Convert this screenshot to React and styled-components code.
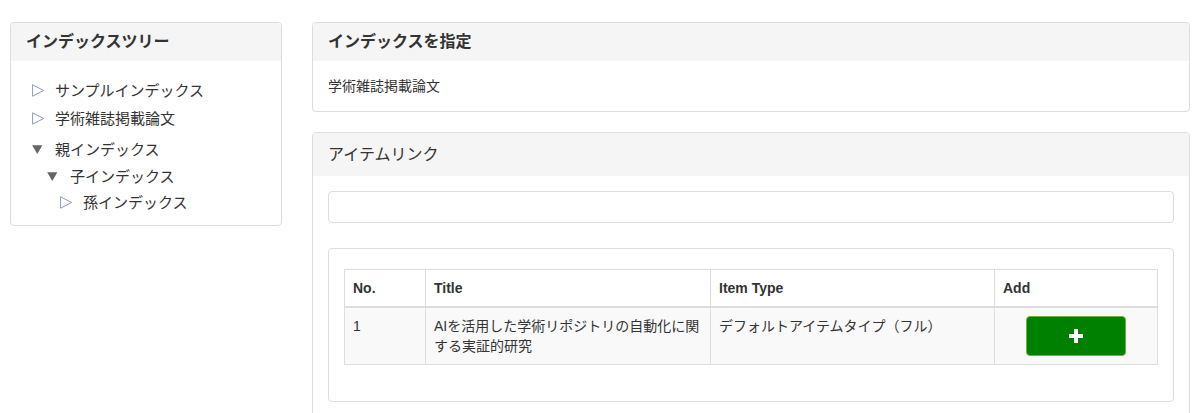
import React from "react";
import styled, { createGlobalStyle } from "styled-components";

const Global = createGlobalStyle`
  html, body { margin: 0; padding: 0; background: #fff; }
  body {
    font-family: "Liberation Sans", "Noto Sans CJK JP", sans-serif;
    font-size: 14px;
    line-height: 20px;
    color: #333;
  }
  * { box-sizing: border-box; }
`;

const Page = styled.div`
  display: flex;
  align-items: flex-start;
  gap: 30px;
  padding: 22px 6px 0 10px;
`;

const LeftCol = styled.div`
  width: 272px;
  flex: none;
`;

const RightCol = styled.div`
  flex: 1;
  display: flex;
  flex-direction: column;
  gap: 20px;
`;

const Panel = styled.section`
  border: 1px solid #ddd;
  border-radius: 4px;
  background: #fff;
  overflow: hidden;
`;

const PanelHeading = styled.div`
  background: #f5f5f5;
  height: ${(p) => p.$h || 38}px;
  padding: 0 15px;
  display: flex;
  align-items: center;
  font-size: 16px;
  font-weight: ${(p) => (p.$bold ? 700 : 400)};
  color: #333;
`;

const PanelBody = styled.div`
  padding: ${(p) => p.$pad || "15px"};
`;

const TreeList = styled.ul`
  list-style: none;
  margin: 0;
  padding: 0 0 0 ${(p) => p.$indent || 0}px;
`;

const TreeRow = styled.div`
  display: flex;
  align-items: center;
  height: ${(p) => p.$h}px;
  margin-top: ${(p) => p.$mt || 0}px;
  font-size: 15px;
  color: #333;
  white-space: nowrap;
  padding-top: 1px;
`;

const Arrow = styled.svg`
  flex: none;
  width: 13px;
  height: 13px;
  margin-right: 10px;
`;

const OpenArrow = () => (
  <Arrow viewBox="0 0 13 13">
    <path d="M0.6 0.8 L11.6 6.5 L0.6 12.2 Z" fill="none" stroke="#8d9ac0" strokeWidth="1" />
  </Arrow>
);

const ClosedArrow = () => (
  <Arrow viewBox="0 0 13 13">
    <path d="M0.2 2.2 L10.4 2.2 L5.3 11 Z" fill="#666" />
  </Arrow>
);

const SearchInput = styled.input`
  display: block;
  width: 100%;
  height: 32px;
  border: 1px solid #ddd;
  border-radius: 4px;
  padding: 6px 12px;
  font: inherit;
`;

const Well = styled.div`
  margin-top: 25px;
  border: 1px solid #ddd;
  border-radius: 4px;
  padding: 20px 15px 36px;
`;

const Table = styled.table`
  width: 100%;
  border-collapse: collapse;
  table-layout: fixed;
  border: 1px solid #ddd;
`;

const Th = styled.th`
  text-align: left;
  font-weight: 700;
  padding: 8px;
  line-height: 20px;
  border: 1px solid #ddd;
  border-bottom: 2px solid #ddd;
`;

const Tr = styled.tr`
  background: ${(p) => (p.$striped ? "#f9f9f9" : "#fff")};
`;

const Td = styled.td`
  padding: 8px;
  vertical-align: top;
  line-height: 20px;
  border: 1px solid #ddd;
  text-align: ${(p) => p.$align || "left"};
`;

const AddButton = styled.button`
  width: 100px;
  height: 40px;
  background: #008000;
  border: 1px solid #6fb23a;
  border-radius: 4px;
  display: inline-flex;
  align-items: center;
  justify-content: center;
  cursor: pointer;
  padding: 0;
  vertical-align: top;
`;

const PlusIcon = () => (
  <svg width="14" height="14" viewBox="0 0 14 14">
    <rect x="5" y="0" width="4" height="14" fill="#fff" />
    <rect x="0" y="5" width="14" height="4" fill="#fff" />
  </svg>
);

export default function App() {
  return (
    <>
      <Global />
      <Page>
        <LeftCol>
          <Panel>
            <PanelHeading $bold $h={38}>インデックスツリー</PanelHeading>
            <PanelBody $pad="15px 15px 10px 21px">
              <TreeList>
                <li>
                  <TreeRow $h={28}><OpenArrow />サンプルインデックス</TreeRow>
                </li>
                <li>
                  <TreeRow $h={28}><OpenArrow />学術雑誌掲載論文</TreeRow>
                </li>
                <li>
                  <TreeRow $h={28} $mt={3}><ClosedArrow />親インデックス</TreeRow>
                  <TreeList $indent={15}>
                    <li>
                      <TreeRow $h={26}><ClosedArrow />子インデックス</TreeRow>
                      <TreeList $indent={13}>
                        <li>
                          <TreeRow $h={26}><OpenArrow />孫インデックス</TreeRow>
                        </li>
                      </TreeList>
                    </li>
                  </TreeList>
                </li>
              </TreeList>
            </PanelBody>
          </Panel>
        </LeftCol>
        <RightCol>
          <Panel>
            <PanelHeading $bold $h={38}>インデックスを指定</PanelHeading>
            <PanelBody>学術雑誌掲載論文</PanelBody>
          </Panel>
          <Panel>
            <PanelHeading $h={43}>アイテムリンク</PanelHeading>
            <PanelBody>
              <SearchInput type="text" />
              <Well>
                <Table>
                  <colgroup>
                    <col style={{ width: 81 }} />
                    <col style={{ width: 285 }} />
                    <col style={{ width: 284 }} />
                    <col style={{ width: 163 }} />
                  </colgroup>
                  <thead>
                    <tr>
                      <Th>No.</Th>
                      <Th>Title</Th>
                      <Th>Item Type</Th>
                      <Th>Add</Th>
                    </tr>
                  </thead>
                  <tbody>
                    <Tr $striped>
                      <Td>1</Td>
                      <Td>AIを活用した学術リポジトリの自動化に関する実証的研究</Td>
                      <Td>デフォルトアイテムタイプ（フル）</Td>
                      <Td $align="center">
                        <AddButton aria-label="Add"><PlusIcon /></AddButton>
                      </Td>
                    </Tr>
                  </tbody>
                </Table>
              </Well>
            </PanelBody>
          </Panel>
        </RightCol>
      </Page>
    </>
  );
}
